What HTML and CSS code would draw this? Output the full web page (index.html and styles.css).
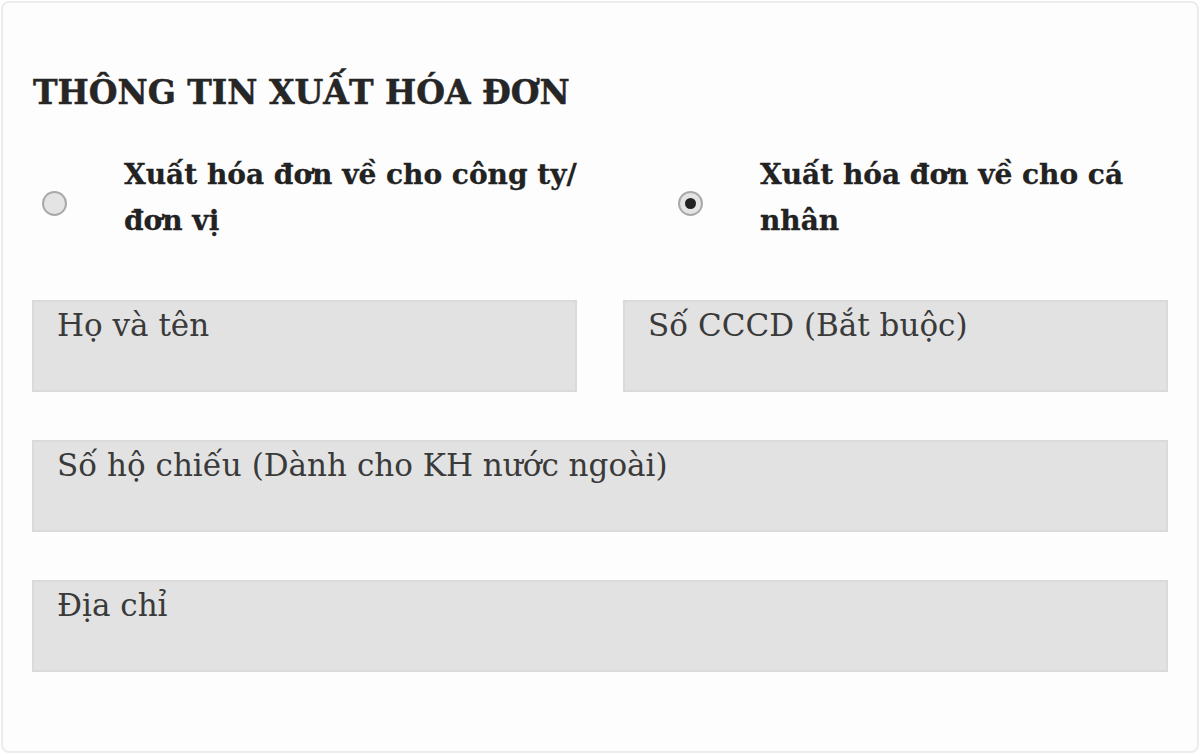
FILE: index.html
```html
<!DOCTYPE html>
<html lang="vi">
<head>
<meta charset="utf-8">
<title>Thông tin xuất hóa đơn</title>
<link rel="stylesheet" href="styles.css">
</head>
<body>
<section class="invoice-card">
  <h2 class="invoice-title">THÔNG TIN XUẤT HÓA ĐƠN</h2>
  <div class="invoice-type">
    <label class="type-option">
      <input type="radio" name="invoice-type" class="type-radio">
      <span class="type-label">Xuất hóa đơn về cho công ty/ đơn vị</span>
    </label>
    <label class="type-option">
      <input type="radio" name="invoice-type" class="type-radio" checked>
      <span class="type-label">Xuất hóa đơn về cho cá nhân</span>
    </label>
  </div>
  <div class="field-grid">
    <textarea class="field" placeholder="Họ và tên"></textarea>
    <textarea class="field" placeholder="Số CCCD (Bắt buộc)"></textarea>
    <textarea class="field field-wide" placeholder="Số hộ chiếu (Dành cho KH nước ngoài)"></textarea>
    <textarea class="field field-wide" placeholder="Địa chỉ"></textarea>
  </div>
</section>
</body>
</html>
```

FILE: styles.css
```css
html, body {
  margin: 0;
  padding: 0;
  background: #ffffff;
}

body {
  padding: 1px;
  font-family: "DejaVu Serif", "Liberation Serif", serif;
  color: #252525;
}

.invoice-card {
  box-sizing: border-box;
  height: 752px;
  border: 2px solid #ececec;
  border-radius: 8px;
  background: #fdfdfd;
  padding: 70px 29px 0 29px;
}

.invoice-title {
  margin: 0;
  font-size: 33px;
  line-height: 40px;
  font-weight: bold;
  color: #262626;
  padding-left: 1px;
  -webkit-text-stroke: 0.5px #262626;
}

.invoice-type {
  display: grid;
  grid-template-columns: 636px 1fr;
  margin-top: 39px;
}

.type-option {
  display: flex;
  align-items: center;
  padding-left: 10px;
}

.type-radio {
  appearance: none;
  -webkit-appearance: none;
  flex: none;
  box-sizing: border-box;
  width: 25px;
  height: 25px;
  margin: 10px 0 0 0;
  border: 2px solid #a9a9a9;
  border-radius: 50%;
  background: #e4e4e4;
  display: grid;
  place-items: center;
}

.type-radio:checked::after {
  content: "";
  width: 11px;
  height: 11px;
  border-radius: 50%;
  background: #222222;
}

.type-label {
  margin-left: 57px;
  font-size: 28px;
  line-height: 46px;
  font-weight: bold;
  color: #222222;
  max-width: 480px;
  -webkit-text-stroke: 0.3px #222222;
}

.field-grid {
  display: grid;
  grid-template-columns: 1fr 1fr;
  column-gap: 46px;
  row-gap: 48px;
  margin-top: 56px;
}

.field {
  box-sizing: border-box;
  height: 92px;
  margin: 0;
  padding: 5px 23px;
  border: 2px solid #dadada;
  background: #e2e2e2;
  font-family: "DejaVu Serif", "Liberation Serif", serif;
  font-size: 31px;
  line-height: 36px;
  color: #333333;
  resize: none;
  outline: none;
  border-radius: 0;
}

.field::placeholder {
  color: #3a3a3a;
  opacity: 1;
}

.field-wide {
  grid-column: 1 / -1;
}
```
